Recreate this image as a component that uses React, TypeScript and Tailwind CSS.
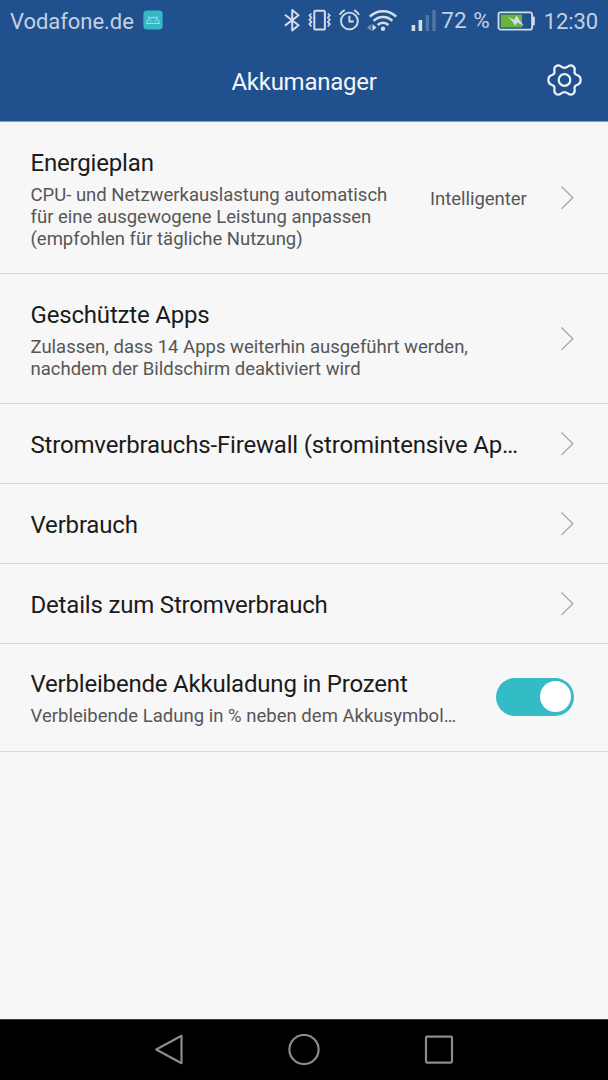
import { useState } from 'react'

interface SettingRow {
  id: string
  title: string
  description?: string
  value?: string
}

const rows: SettingRow[] = [
  {
    id: 'plan',
    title: 'Energieplan',
    description: 'CPU- und Netzwerkauslastung automatisch für eine ausgewogene Leistung anpassen (empfohlen für tägliche Nutzung)',
    value: 'Intelligenter'
  },
  {
    id: 'protected',
    title: 'Geschützte Apps',
    description: 'Zulassen, dass 14 Apps weiterhin ausgeführt werden, nachdem der Bildschirm deaktiviert wird'
  },
  { id: 'firewall', title: 'Stromverbrauchs-Firewall (stromintensive Ap…' },
  { id: 'usage', title: 'Verbrauch' },
  { id: 'details', title: 'Details zum Stromverbrauch' }
]

const StatusBar = () => (
  <div className="flex h-[42px] items-center justify-between pl-[10px] pr-[10px] text-[#c4d0e0]">
    <div className="flex items-center">
      <span className="text-[22px] tracking-[-0.05px]">Vodafone.de</span>
      <svg className="ml-[9px] -mt-[2px]" width="20" height="20" viewBox="0 0 20 20" fill="none">
        <rect x="0.4" y="0.4" width="19.2" height="19.2" rx="3.5" fill="#35b9c6" />
        <path d="M3.8 13.5a6.2 6.2 0 0 1 12.4 0zM6.8 8.3 5.5 6.2M13.2 8.3l1.3-2.1" stroke="#a9d9e2" strokeWidth="1.1" />
        <circle cx="7.7" cy="11" r="0.8" fill="#a9d9e2" />
        <circle cx="12.3" cy="11" r="0.8" fill="#a9d9e2" />
      </svg>
    </div>

    <div className="flex items-center">
      {/* Bluetooth */}
      <svg className="-mt-[3px]" width="17" height="24" viewBox="0.6 0 17 24" fill="none" stroke="#d3dce8" strokeWidth="2" strokeLinejoin="round">
        <path d="M1.5 6.8 15.2 17.2 8.8 22.4V2L15.2 7.2 1.5 17.6" />
      </svg>
      {/* Vibration */}
      <svg className="ml-[7px] -mt-[3px]" width="24" height="24" viewBox="0.6 0 24 24" fill="none" stroke="#d3dce8">
        <rect x="6.9" y="2.8" width="10.6" height="18.8" rx="1.2" strokeWidth="2" />
        <path d="m4 5.5-2 2 2 2-2 2.2 2 2.2-2 2.2 2 2.4M20.4 5.5l2 2-2 2 2 2.2-2 2.2 2 2.2-2 2.4" strokeWidth="1.7" />
      </svg>
      {/* Alarm */}
      <svg className="ml-[7px] -mt-[3px]" width="22" height="24" viewBox="0.6 0 22 24" fill="none" stroke="#d3dce8" strokeWidth="1.9">
        <circle cx="11" cy="13" r="8.4" />
        <path d="M11 7.8v5.7h4.4M1.3 6.7a11 11 0 0 1 5-4.6M20.7 6.7a11 11 0 0 0-5-4.6" />
      </svg>
      {/* Wifi with traffic arrows */}
      <svg className="ml-[6px] -mt-[3px]" width="31" height="24" viewBox="0 0 31 24" fill="none" stroke="#d3dce8" strokeWidth="2.5">
        <path d="M2.8 8.7a18.5 18.5 0 0 1 26.4 0M6.6 12.9a13.2 13.2 0 0 1 18.8 0M10.6 17a7.6 7.6 0 0 1 10.8 0" />
        <circle cx="16" cy="20.8" r="2.2" fill="#d3dce8" stroke="none" />
        <path d="M4.3 16v7L0 19.5z" fill="#6f8fb8" stroke="none" />
        <path d="M5.5 16v7l4-3.5z" fill="#d3dce8" stroke="none" />
      </svg>
      {/* Signal */}
      <svg className="ml-[13px] -mt-[3px]" width="25" height="24" viewBox="0 0 25 24" fill="#d3dce8">
        <rect x="0.6" y="17" width="3.6" height="6" />
        <rect x="7.6" y="12" width="3.6" height="11" />
        <rect x="14.6" y="7" width="3.4" height="16" fill="#5075a7" />
        <rect x="21.3" y="2" width="3.4" height="21" fill="#5075a7" />
      </svg>
      <span className="ml-[5px] text-[22.5px] [word-spacing:1px]">72 %</span>
      {/* Battery */}
      <svg className="ml-[7px] -mt-[2px]" width="38" height="24" viewBox="-0.5 0 38 24" fill="none">
        <rect x="1" y="4.4" width="33.6" height="17.2" rx="2.2" stroke="#d3dce8" strokeWidth="1.8" />
        <rect x="3.2" y="6.6" width="21.4" height="12.8" fill="#68b43c" />
        <path d="M35 8.4h1.5q.8 0 .8.8v7.6q0 .8-.8.8H35z" fill="#d3dce8" />
        <path d="m9.8 8.6 7 3.1 2.2-4.5 3.4 5.6 4.2 5.1-6.8-3.3-2.2 3.2-3-4.8z" fill="#d3dce8" />
      </svg>
      <span className="ml-[9px] text-[22px] tracking-[-0.1px]">12:30</span>
    </div>
  </div>
)

const GearIcon = () => (
  <svg width="36" height="34" viewBox="-17.5 -17 36 34" fill="none" stroke="#edf1f6" strokeWidth="2.2" strokeLinejoin="round">
    <path d="M-10-8.5C-11.4-13.4-7-16.2-3.6-13.6Q0-10.8 3.6-13.6C7-16.2 11.4-13.4 10-8.5Q9.6-5.6 13-4.8C17.2-3.4 17.2 3.4 13 4.8Q9.6 5.6 10 8.5C11.4 13.4 7 16.2 3.6 13.6Q0 10.8-3.6 13.6C-7 16.2-11.4 13.4-10 8.5Q-9.6 5.6-13 4.8C-17.2 3.4-17.2-3.4-13-4.8Q-9.6-5.6-10-8.5Z" />
    <circle r="5.8" />
  </svg>
)

const Chevron = () => (
  <svg className="shrink-0" width="14" height="24" viewBox="0 0 14 24" fill="none" stroke="#a3a3a3" strokeWidth="1.3">
    <path d="M1.5.5 12.8 11.7 1.5 22.9" />
  </svg>
)

export default function App() {
  const [showPercent, setShowPercent] = useState(true)

  return (
    <div className="flex h-[1080px] w-[608px] flex-col overflow-hidden bg-[#f7f7f7] font-[Roboto,sans-serif]">
      {/* Header */}
      <header className="h-[122px] border-b border-[#8d9fb8] bg-[#20508e]">
        <StatusBar />
        <div className="grid h-[79px] grid-cols-[60px_1fr_60px] items-center">
          <h1 className="col-start-2 text-center text-[24px] tracking-[-0.25px] text-[#f3f6fa]">Akkumanager</h1>
          <button className="ml-[-1px] mb-[3px]" aria-label="Einstellungen">
            <GearIcon />
          </button>
        </div>
      </header>

      {/* Settings */}
      <main className="flex-1">
        {rows.map((row) => (
          <div key={row.id} className="flex items-center border-b border-[#d9d9d9] pl-[30.5px] pr-[34px]">
            <div className={`min-w-0 pt-[27px] pb-6 ${row.value ? 'w-[370px]' : 'w-[492px]'}`}>
              <h2 className="text-[24px] leading-[28px] tracking-[-0.18px] whitespace-nowrap text-[#1b1b1b]">{row.title}</h2>
              {row.description && (
                <p className="mt-[7px] -mb-px text-[18.5px] leading-[22px] text-[#565656]">{row.description}</p>
              )}
            </div>
            {row.value && <span className="mt-[5px] ml-[29.5px] text-[18.5px] tracking-[-0.03px] text-[#565656]">{row.value}</span>}
            <div className="ml-auto flex">
              <Chevron />
            </div>
          </div>
        ))}

        <div className="flex items-center justify-between border-b border-[#d9d9d9] pl-[30.5px] pr-[34px]">
          <div className="w-[430px] pt-[26px] pb-6">
            <h2 className="text-[24px] leading-[28px] tracking-[-0.2px] whitespace-nowrap text-[#1b1b1b]">
              Verbleibende Akkuladung in Prozent
            </h2>
            <p className="mt-[7px] text-[18.5px] leading-[22px] tracking-[0.02px] whitespace-nowrap text-[#565656]">
              Verbleibende Ladung in % neben dem Akkusymbol…
            </p>
          </div>
          <button
            role="switch"
            aria-checked={showPercent}
            onClick={() => setShowPercent(!showPercent)}
            className={`mb-[2px] flex h-[38px] w-[78px] items-center rounded-full px-[3px] ${
              showPercent ? 'justify-end bg-[#34bcc6]' : 'justify-start bg-gray-300'
            }`}
          >
            <span className="size-[31px] rounded-full bg-white" />
          </button>
        </div>
      </main>

      {/* Navigation */}
      <nav className="flex h-[61px] items-center justify-center gap-[103px] border-t border-[#3a3a3a] bg-black">
        <svg width="32" height="32" viewBox="0 0 32 32" fill="none" stroke="#8b8b8b" strokeWidth="2.2" strokeLinejoin="round">
          <path d="M28.5 1.8v27.4L3.2 15.5z" />
        </svg>
        <svg width="32" height="32" viewBox="0 0 32 32" fill="none" stroke="#8b8b8b" strokeWidth="2.2">
          <circle cx="16" cy="15.5" r="14.6" />
        </svg>
        <svg width="32" height="32" viewBox="0 0 32 32" fill="none" stroke="#8b8b8b" strokeWidth="2.2">
          <rect x="3" y="2.6" width="26" height="26" rx="1" />
        </svg>
      </nav>
    </div>
  )
}
